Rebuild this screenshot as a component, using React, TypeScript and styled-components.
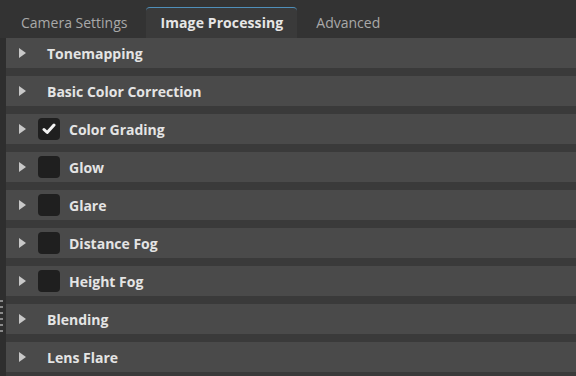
import React, { useState } from 'react'
import styled, { createGlobalStyle } from 'styled-components'

const GlobalStyle = createGlobalStyle`
  html, body {
    margin: 0;
    padding: 0;
    background: #3a3a3a;
    font-family: 'Open Sans', 'Liberation Sans', sans-serif;
  }
`

const Frame = styled.div`
  width: 576px;
  height: 376px;
  overflow: hidden;
  display: flex;
  flex-direction: column;
  background: #3a3a3a;
`

const TabBar = styled.div`
  height: 38px;
  flex: 0 0 38px;
  display: flex;
  align-items: flex-end;
  gap: 5px;
  padding-left: 7px;
  background: #333333;
  box-sizing: border-box;
`

const Tab = styled.div<{ active?: boolean }>`
  height: 31px;
  box-sizing: border-box;
  display: flex;
  align-items: center;
  justify-content: center;
  padding: 0 14px 2px;
  font-size: 14px;
  font-weight: ${({ active }) => (active ? 700 : 400)};
  letter-spacing: ${({ active }) => (active ? '0.1px' : '0')};
  color: ${({ active }) => (active ? '#e6e6e6' : '#a9a9a9')};
  background: ${({ active }) => (active ? '#3a3a3a' : 'transparent')};
  border-top: 1px solid ${({ active }) => (active ? '#4f8fba' : 'transparent')};
  border-radius: 4px 4px 0 0;
  cursor: pointer;
`

const Body = styled.div`
  flex: 1;
  display: flex;
`

const Grip = styled.div`
  width: 6px;
  flex: 0 0 6px;
  background: #2e2e2e;
  display: flex;
  flex-direction: column;
  gap: 4px;
  padding-top: 262px;
`

const GripDot = styled.div`
  width: 3px;
  height: 2px;
  background: #8a8a8a;
`

const List = styled.div`
  flex: 1;
  display: flex;
  flex-direction: column;
  gap: 8px;
`

const Header = styled.div`
  height: 30px;
  flex: 0 0 30px;
  display: flex;
  align-items: center;
  background: #4a4a4a;
  padding-left: 13px;
`

const Arrow = styled.svg`
  width: 7px;
  height: 10px;
  flex: 0 0 7px;
  margin-right: 19px;
`

const Check = styled.div`
  width: 22px;
  height: 22px;
  border-radius: 4px;
  background: #1f1f1f;
  display: flex;
  align-items: center;
  justify-content: center;
  margin-left: -7px;
  margin-right: 9px;
`

const Spacer = styled.div`
  width: 2px;
`

const Title = styled.span`
  font-size: 14px;
  font-weight: 700;
  color: #e4e4e4;
  white-space: nowrap;
`

type Section = { title: string; check?: boolean }

const sections: Section[] = [
  { title: 'Tonemapping' },
  { title: 'Basic Color Correction' },
  { title: 'Color Grading', check: true },
  { title: 'Glow', check: false },
  { title: 'Glare', check: false },
  { title: 'Distance Fog', check: false },
  { title: 'Height Fog', check: false },
  { title: 'Blending' },
  { title: 'Lens Flare' },
]

const tabs = ['Camera Settings', 'Image Processing', 'Advanced']

export default function App() {
  const [active, setActive] = useState(1)

  return (
    <Frame>
      <GlobalStyle />
      <TabBar>
        {tabs.map((t, i) => (
          <Tab key={t} active={i === active} onClick={() => setActive(i)}>
            {t}
          </Tab>
        ))}
      </TabBar>
      <Body>
        <Grip>
          {[0, 1, 2, 3, 4, 5].map((i) => (
            <GripDot key={i} />
          ))}
        </Grip>
        <List>
          {sections.map((s) => (
            <Header key={s.title}>
              <Arrow viewBox="0 0 7 10">
                <path d="M0 0 L7 5 L0 10 Z" fill="#c8c8c8" />
              </Arrow>
              {s.check !== undefined ? (
                <Check>
                  {s.check && (
                    <svg width="14" height="12" viewBox="0 0 14 12">
                      <path d="M2 6.5 L5.2 9.5 L12 2" stroke="#f2f2f2" strokeWidth="3" fill="none" strokeLinecap="round" strokeLinejoin="round" />
                    </svg>
                  )}
                </Check>
              ) : (
                <Spacer />
              )}
              <Title>{s.title}</Title>
            </Header>
          ))}
        </List>
      </Body>
    </Frame>
  )
}
